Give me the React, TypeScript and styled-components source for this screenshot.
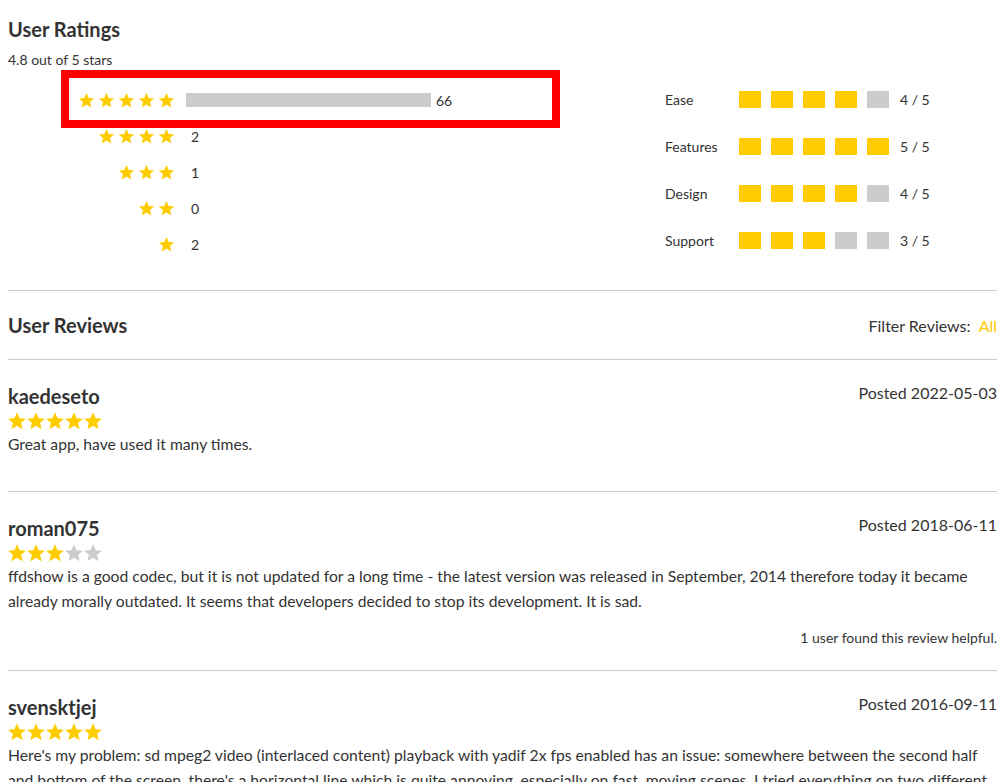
import React from "react";
import styled, { createGlobalStyle } from "styled-components";

const GlobalStyle = createGlobalStyle`
  html, body {
    margin: 0;
    overflow: hidden;
    background: #fff;
  }
  body {
    font-family: Lato, "Open Sans", "Liberation Sans", sans-serif;
    color: #333;
  }
`;

const YELLOW = "#ffcc00";
const GREY = "#cccccc";

const histogram = [
  { stars: 5, count: 66, width: 245 },
  { stars: 4, count: 2, width: 0 },
  { stars: 3, count: 1, width: 0 },
  { stars: 2, count: 0, width: 0 },
  { stars: 1, count: 2, width: 0 },
];

const aspects = [
  { label: "Ease", score: 4 },
  { label: "Features", score: 5 },
  { label: "Design", score: 4 },
  { label: "Support", score: 3 },
];

const reviews = [
  {
    author: "kaedeseto",
    posted: "2022-05-03",
    rating: 5,
    text: "Great app, have used it many times.",
  },
  {
    author: "roman075",
    posted: "2018-06-11",
    rating: 3,
    text:
      "ffdshow is a good codec, but it is not updated for a long time - the latest version was released in September, 2014 therefore today it became already morally outdated. It seems that developers decided to stop its development. It is sad.",
    helpful: "1 user found this review helpful.",
  },
  {
    author: "svensktjej",
    posted: "2016-09-11",
    rating: 5,
    text:
      "Here's my problem: sd mpeg2 video (interlaced content) playback with yadif 2x fps enabled has an issue: somewhere between the second half and bottom of the screen, there's a horizontal line which is quite annoying, especially on fast, moving scenes. I tried everything on two different machines and the line is still there, so any help would be appreciated.",
  },
];

function Star({ size, color }: { size: number; color: string }) {
  return (
    <svg width={size} height={size} viewBox="0 0 24 24" aria-hidden="true">
      <polygon
        fill={color}
        points="12,1.5 15.1,8.6 22.8,9.2 16.9,14.2 18.7,21.8 12,17.7 5.3,21.8 7.1,14.2 1.2,9.2 8.9,8.6"
      />
    </svg>
  );
}

function App() {
  return (
    <>
      <GlobalStyle />
      <Page>
        <SectionTitle>User Ratings</SectionTitle>
        <Subtitle>4.8 out of 5 stars</Subtitle>
        <RatingsBody>
          <Histogram>
            <Highlight />
            {histogram.map((row) => (
              <HistRow key={row.stars}>
                <StarCell>
                  {Array.from({ length: row.stars }).map((_, i) => (
                    <Star key={i} size={17} color={YELLOW} />
                  ))}
                </StarCell>
                <Bar style={{ width: row.width }} />
                <Count>{row.count}</Count>
              </HistRow>
            ))}
          </Histogram>
          <Aspects>
            {aspects.map((a) => (
              <AspectRow key={a.label}>
                <AspectLabel>{a.label}</AspectLabel>
                <Blocks>
                  {[1, 2, 3, 4, 5].map((n) => (
                    <Block key={n} $filled={n <= a.score} />
                  ))}
                </Blocks>
                <Score>{a.score} / 5</Score>
              </AspectRow>
            ))}
          </Aspects>
        </RatingsBody>

        <Divider />
        <ReviewsHeader>
          <SectionTitle>User Reviews</SectionTitle>
          <Filter>
            Filter Reviews: <FilterValue>All</FilterValue>
          </Filter>
        </ReviewsHeader>

        {reviews.map((r) => (
          <Review key={r.author}>
            <ReviewTop>
              <Author>{r.author}</Author>
              <Posted>Posted {r.posted}</Posted>
            </ReviewTop>
            <Stars>
              {[1, 2, 3, 4, 5].map((n) => (
                <Star key={n} size={20} color={n <= r.rating ? YELLOW : GREY} />
              ))}
            </Stars>
            <ReviewText>{r.text}</ReviewText>
            {r.helpful && <Helpful>{r.helpful}</Helpful>}
          </Review>
        ))}
      </Page>
    </>
  );
}

export default App;

const Page = styled.div`
  padding: 17px 2px 0 8px;
`;

const SectionTitle = styled.h2`
  margin: 0;
  font-size: 20px;
  line-height: 24px;
  font-weight: 700;
  color: #333;
`;

const Subtitle = styled.div`
  margin-top: 10px;
  font-size: 14px;
  line-height: 18px;
`;

const RatingsBody = styled.div`
  display: flex;
  margin-top: 13px;
  padding-bottom: 28px;
`;

const Histogram = styled.div`
  position: relative;
  flex: 0 0 657px;
  display: flex;
  flex-direction: column;
`;

// red annotation box drawn over the top row
const Highlight = styled.div`
  position: absolute;
  left: 53px;
  top: -12px;
  width: 499px;
  height: 58px;
  box-sizing: border-box;
  border: 8px solid #ff0000;
  pointer-events: none;
`;

const HistRow = styled.div`
  display: flex;
  align-items: center;
  height: 36px;
`;

const StarCell = styled.div`
  width: 167px;
  display: flex;
  justify-content: flex-end;
  gap: 3px;
`;

const Bar = styled.div`
  height: 14px;
  margin-left: 11px;
  background: ${GREY};
`;

const Count = styled.span`
  margin-left: 5px;
  font-size: 14px;
`;

const Aspects = styled.div`
  display: flex;
  flex-direction: column;
  gap: 11px;
  margin-top: -1px;
`;

const AspectRow = styled.div`
  display: flex;
  align-items: center;
  height: 36px;
  font-size: 14px;
`;

const AspectLabel = styled.span`
  width: 74px;
`;

const Blocks = styled.div`
  display: flex;
  gap: 10px;
`;

const Block = styled.div<{ $filled: boolean }>`
  width: 22px;
  height: 17px;
  background: ${(p) => (p.$filled ? YELLOW : GREY)};
`;

const Score = styled.span`
  margin-left: 11px;
`;

const Divider = styled.hr`
  margin: 0;
  border: none;
  border-top: 1px solid ${GREY};
`;

const ReviewsHeader = styled.div`
  display: flex;
  align-items: center;
  justify-content: space-between;
  height: 68px;
  border-bottom: 1px solid ${GREY};
`;

const Filter = styled.div`
  font-size: 16px;
`;

const FilterValue = styled.span`
  margin-left: 4px;
  color: ${YELLOW};
`;

const Review = styled.div`
  padding: 24px 0 23px;
  border-bottom: 1px solid ${GREY};
`;

const ReviewTop = styled.div`
  display: flex;
  justify-content: space-between;
  align-items: flex-start;
`;

const Author = styled.div`
  font-size: 20px;
  line-height: 24px;
  font-weight: 700;
`;

const Posted = styled.div`
  font-size: 16px;
  line-height: 18px;
`;

const Stars = styled.div`
  display: flex;
  height: 22px;
  align-items: center;
  margin: 2px 0 0 -1px;
  svg {
    margin-right: -1px;
  }
`;

const ReviewText = styled.p`
  margin: 0 0 11px;
  font-size: 15.7px;
  line-height: 25px;
`;

const Helpful = styled.div`
  margin-top: 15px;
  text-align: right;
  font-size: 14px;
  line-height: 18px;
`;
